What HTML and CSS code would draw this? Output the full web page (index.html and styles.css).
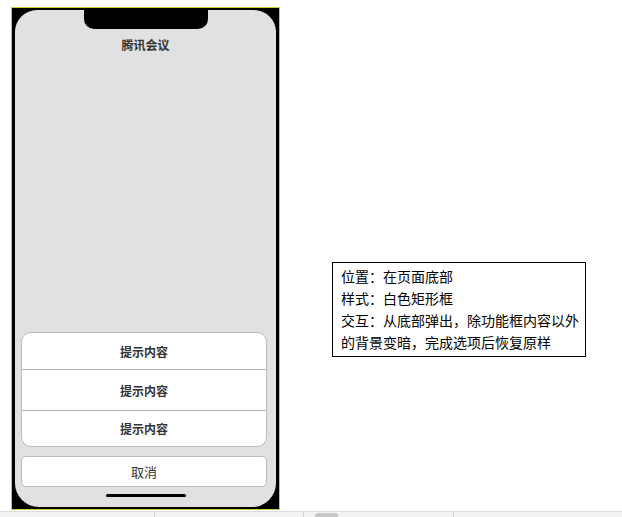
FILE: index.html
```html
<!DOCTYPE html>
<html lang="zh-CN">
<head>
<meta charset="utf-8">
<title>腾讯会议</title>
<link rel="stylesheet" href="styles.css">
</head>
<body>
<div class="page">
  <div class="main">
    <div class="phone">
      <div class="screen">
        <div class="notch"></div>
        <div class="title">腾讯会议</div>
        <div class="sheet">
          <div class="group">
            <div class="item item-1">提示内容</div>
            <div class="item item-2">提示内容</div>
            <div class="item item-3">提示内容</div>
          </div>
          <div class="cancel">取消</div>
          <div class="home"></div>
        </div>
      </div>
    </div>
    <div class="note">
      位置：在页面底部<br>
      样式：白色矩形框<br>
      交互：从底部弹出，除功能框内容以外<br>
      的背景变暗，完成选项后恢复原样
    </div>
  </div>
  <div class="tabbar">
    <div class="tab tab-a"></div>
    <div class="tab tab-b"></div>
    <div class="thumb"></div>
    <div class="tab tab-c"></div>
  </div>
</div>
</body>
</html>
```

FILE: styles.css
```css
* { box-sizing: border-box; }
html, body { margin: 0; padding: 0; background: #fff; }
body {
  font-family: "Noto Sans CJK SC", "Noto Sans", "Liberation Sans", sans-serif;
  color: #333;
  width: 622px;
  height: 517px;
  overflow: hidden;
}
.page { display: flex; flex-direction: column; height: 517px; }
.main {
  display: flex;
  align-items: flex-start;
  padding: 7px 0 0 11px;
  gap: 52px;
  height: 511px;
}
.phone {
  width: 269px;
  height: 503px;
  border: 1px solid #c9c93a;
  background: #000;
  padding: 2px 3px 2px 3px;
  flex: none;
}
.screen {
  width: 100%;
  height: 100%;
  background: #e1e1e1;
  border-radius: 22px 22px 24px 24px;
  display: flex;
  flex-direction: column;
  align-items: center;
}
.notch {
  width: 124px;
  height: 19px;
  background: #000;
  border-radius: 0 0 10px 10px;
  flex: none;
}
.title {
  margin-top: 8px;
  font-size: 12px;
  line-height: 16px;
  font-weight: bold;
  color: #333;
}
.sheet {
  margin-top: auto;
  width: 246px;
  margin-right: 3px;
  display: flex;
  flex-direction: column;
  align-items: center;
  padding-bottom: 10px;
}
.group {
  width: 100%;
  background: #fff;
  border: 1px solid #bcbcbc;
  border-radius: 10px;
  overflow: hidden;
}
.item {
  display: flex;
  align-items: center;
  justify-content: center;
  font-size: 12px;
  font-weight: bold;
  color: #333;
}
.item-1 { height: 36px; }
.item-2 { height: 41px; border-top: 1px solid #b4b4b4; }
.item-3 { height: 36px; border-top: 1px solid #b4b4b4; }
.cancel {
  margin-top: 9px;
  width: 100%;
  height: 31px;
  background: #fff;
  border: 1px solid #bcbcbc;
  border-radius: 5px;
  display: flex;
  align-items: center;
  justify-content: center;
  font-size: 13px;
  color: #333;
}
.home {
  margin-top: 7px;
  width: 80px;
  height: 3px;
  background: #000;
  border-radius: 2px;
  margin-left: 3px;
}
.note {
  margin-top: 255px;
  width: 254px;
  height: 95px;
  border: 1px solid #000;
  padding: 2px 8px;
  font-size: 14px;
  line-height: 22px;
  color: #000;
  white-space: nowrap;
}
.tabbar {
  height: 6px;
  background: #f2f2f2;
  border-top: 1px solid #dcdcdc;
  display: flex;
  align-items: flex-start;
}
.tab { height: 5px; border-right: 1px solid #cfcfcf; flex: none; }
.tab-a { width: 155px; }
.tab-b { width: 149px; }
.thumb {
  width: 23px;
  height: 4px;
  margin: 1px 0 0 11px;
  background: #c6c6c6;
  border-radius: 3px 3px 0 0;
  flex: none;
}
.tab-c { width: 116px; }
```
